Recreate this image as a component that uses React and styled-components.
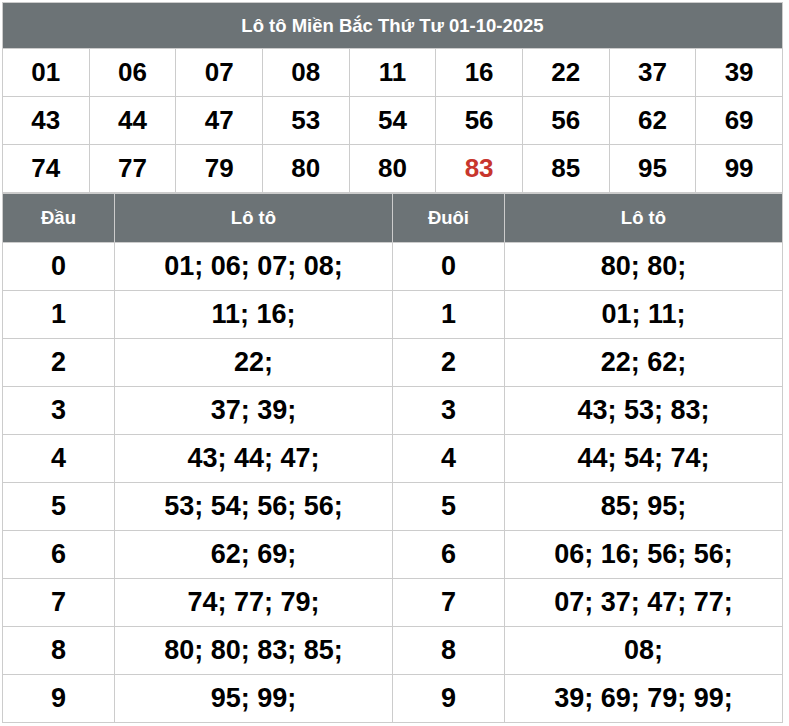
import React from "react";
import styled, { createGlobalStyle } from "styled-components";

const GlobalStyle = createGlobalStyle`
  body {
    margin: 0;
    background: #fff;
    font-family: "Liberation Sans", Arial, sans-serif;
  }
`;

const Page = styled.div`
  padding: 2px;
  width: 781px;
`;

const Table = styled.table`
  width: 100%;
  border-collapse: collapse;
  table-layout: fixed;
  font-weight: 700;
  text-align: center;
`;

const TitleCell = styled.th`
  background: #6c7376;
  color: #fff;
  font-size: 18.5px;
  height: 45px;
  padding: 0;
  border: 1px solid #ccc;
`;

const NumberCell = styled.td`
  height: 47px;
  padding: 0;
  border: 1px solid #ccc;
  font-size: 26px;
  color: ${(p) => (p.$hot ? "#c8362d" : "#000")};
`;

const HeadCell = styled.th`
  background: #6c7376;
  color: #fff;
  font-size: 18.5px;
  height: 48px;
  padding: 0;
  border: 1px solid #ccc;
  width: ${(p) => p.$w};
`;

const DataCell = styled.td`
  height: 47px;
  padding: 0;
  border: 1px solid #ccc;
  font-size: 27px;
  color: #000;
`;

const numbers = [
  "01", "06", "07", "08", "11", "16", "22", "37", "39",
  "43", "44", "47", "53", "54", "56", "56", "62", "69",
  "74", "77", "79", "80", "80", "83", "85", "95", "99",
];

const hot = ["83"];

const rows = [];
for (let i = 0; i < numbers.length; i += 9) rows.push(numbers.slice(i, i + 9));

const digits = [0, 1, 2, 3, 4, 5, 6, 7, 8, 9];
const heads = digits.map((d) => numbers.filter((n) => n[0] === String(d)));
const tails = digits.map((d) =>
  numbers.filter((n) => n[1] === String(d)).sort()
);

const App = () => {
  return (
    <Page>
      <GlobalStyle />
      <Table>
        <thead>
          <tr>
            <TitleCell colSpan={9}>Lô tô Miền Bắc Thứ Tư 01-10-2025</TitleCell>
          </tr>
        </thead>
        <tbody>
          {rows.map((row, r) => (
            <tr key={r}>
              {row.map((n, i) => (
                <NumberCell key={i} $hot={hot.includes(n)}>
                  {n}
                </NumberCell>
              ))}
            </tr>
          ))}
        </tbody>
      </Table>
      <Table>
        <thead>
          <tr>
            <HeadCell $w="14.3%">Đầu</HeadCell>
            <HeadCell $w="35.7%">Lô tô</HeadCell>
            <HeadCell $w="14.3%">Đuôi</HeadCell>
            <HeadCell $w="35.7%">Lô tô</HeadCell>
          </tr>
        </thead>
        <tbody>
          {digits.map((d) => (
            <tr key={d}>
              <DataCell>{d}</DataCell>
              <DataCell>{heads[d].map((n) => n + "; ").join("").trim()}</DataCell>
              <DataCell>{d}</DataCell>
              <DataCell>{tails[d].map((n) => n + "; ").join("").trim()}</DataCell>
            </tr>
          ))}
        </tbody>
      </Table>
    </Page>
  );
};

export default App;
